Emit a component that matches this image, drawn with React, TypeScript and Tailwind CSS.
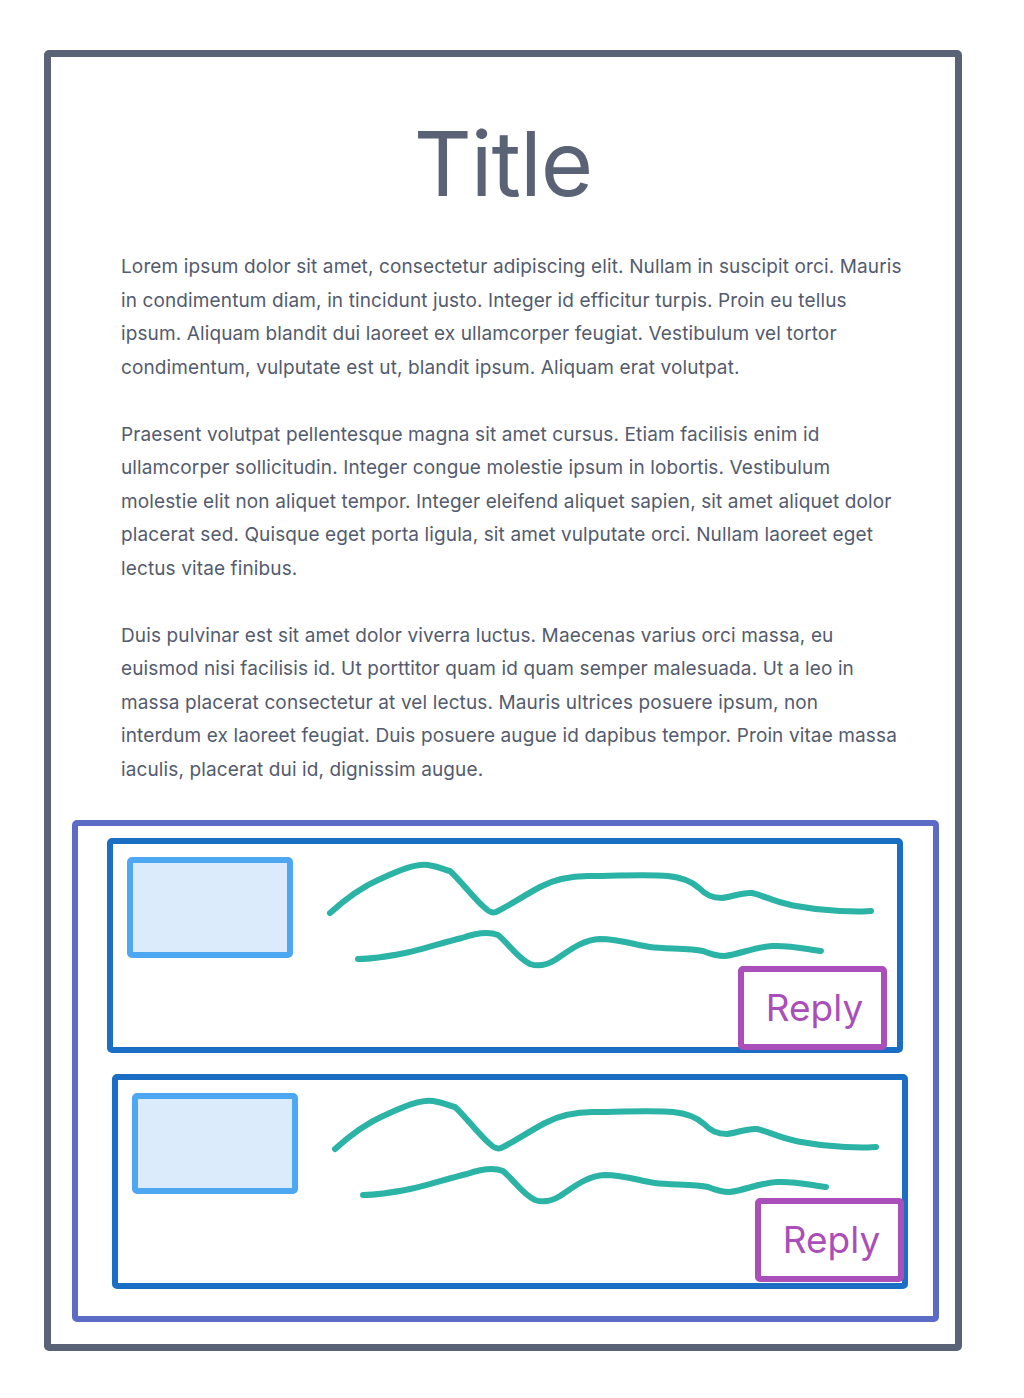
const font = { fontFamily: "Inter, 'Noto Sans', sans-serif" };

const paragraphs = [
  "Lorem ipsum dolor sit amet, consectetur adipiscing elit. Nullam in suscipit orci. Mauris in condimentum diam, in tincidunt justo. Integer id efficitur turpis. Proin eu tellus ipsum. Aliquam blandit dui laoreet ex ullamcorper feugiat. Vestibulum vel tortor condimentum, vulputate est ut, blandit ipsum. Aliquam erat volutpat.",
  "Praesent volutpat pellentesque magna sit amet cursus. Etiam facilisis enim id ullamcorper sollicitudin. Integer congue molestie ipsum in lobortis. Vestibulum molestie elit non aliquet tempor. Integer eleifend aliquet sapien, sit amet aliquet dolor placerat sed. Quisque eget porta ligula, sit amet vulputate orci. Nullam laoreet eget lectus vitae finibus.",
  "Duis pulvinar est sit amet dolor viverra luctus. Maecenas varius orci massa, eu euismod nisi facilisis id. Ut porttitor quam id quam semper malesuada. Ut a leo in massa placerat consectetur at vel lectus. Mauris ultrices posuere ipsum, non interdum ex laoreet feugiat. Duis posuere augue id dapibus tempor. Proin vitae massa iaculis, placerat dui id, dignissim augue.",
];

// hand-drawn text placeholder lines, origin at (320, 850) of the first card
function Squiggles() {
  return (
    <svg width="570" height="130" viewBox="0 0 570 130" className="shrink-0 ml-[27px]" fill="none">
      <path
        d="M10 63 C 20 54, 40 38, 58 30 S 95 13, 108 15 S 125 20, 130 21 C 140 30, 155 50, 165 58 Q 172 65, 178 61 C 190 55, 205 45, 220 37 S 250 26, 268 26 S 330 24, 348 26 Q 368 28, 379 38 C 386 45, 392 48, 402 48 C 412 47, 422 42, 432 43 C 442 45, 455 52, 471 55 S 495 60, 520 61 S 545 61, 551 61"
        stroke="#2bb3a6"
        strokeWidth="6"
        strokeLinecap="round"
        strokeLinejoin="round"
      />
      <path
        d="M38 109 C 50 109, 70 106, 85 103 S 125 92, 142 88 Q 165 80, 178 85 C 190 95, 197 108, 210 114 Q 222 118, 235 110 C 250 100, 262 90, 280 89 C 300 89, 315 95, 330 97 S 370 98, 383 101 Q 395 106, 405 106 C 420 104, 435 97, 452 96 C 470 95, 485 99, 501 101"
        stroke="#2bb3a6"
        strokeWidth="6"
        strokeLinecap="round"
        strokeLinejoin="round"
      />
    </svg>
  );
}

function CommentCard({ shift, replyPos }: { shift: string; replyPos: string }) {
  return (
    <div className={`relative h-[215px] w-[796px] border-[6px] border-[#1a6fc4] rounded-[5px] pl-[14px] pt-[6px] ${shift}`}>
      <div className="flex items-start">
        <div className="mt-[7px] h-[101px] w-[166px] shrink-0 rounded-[5px] border-[6px] border-[#4da7f1] bg-[#dbebfb]" />
        <Squiggles />
      </div>
      <div
        className={`absolute ${replyPos} flex h-[84px] w-[149px] items-center justify-center rounded-[5px] border-[6px] border-[#aa4fb9] bg-white pl-[4px] text-[37px] text-[#aa4fb9]`}
        style={font}
      >
        Reply
      </div>
    </div>
  );
}

export default function App() {
  return (
    <div className="min-h-[1398px] bg-white pt-[50px]" style={font}>
      <div className="ml-[44px] w-[918px] rounded-[5px] border-[7px] border-[#5a6275] pb-[22px]">
        <h1 className="mt-[62px] text-center text-[90px] font-normal leading-[90px] tracking-[-1px] text-[#5a6275]">Title</h1>

        <div className="ml-[70px] mt-[41px] w-[781px] text-[19px] leading-[33.5px] tracking-[0.12px] text-[#535b6e]">
          {paragraphs.map((p, i) => (
            <p key={i} className={i > 0 ? "mt-[33.5px]" : ""}>
              {p}
            </p>
          ))}
        </div>

        {/* comments block */}
        <div className="ml-[21px] mt-[34px] w-[867px] rounded-[5px] border-[6px] border-[#5c6cc6] pb-[27px] pt-[12px]">
          <CommentCard shift="ml-[29px]" replyPos="right-[10px] bottom-[-3px]" />
          <CommentCard shift="ml-[34px] mt-[21px]" replyPos="right-[-2px] bottom-[1px]" />
        </div>
      </div>
    </div>
  );
}
